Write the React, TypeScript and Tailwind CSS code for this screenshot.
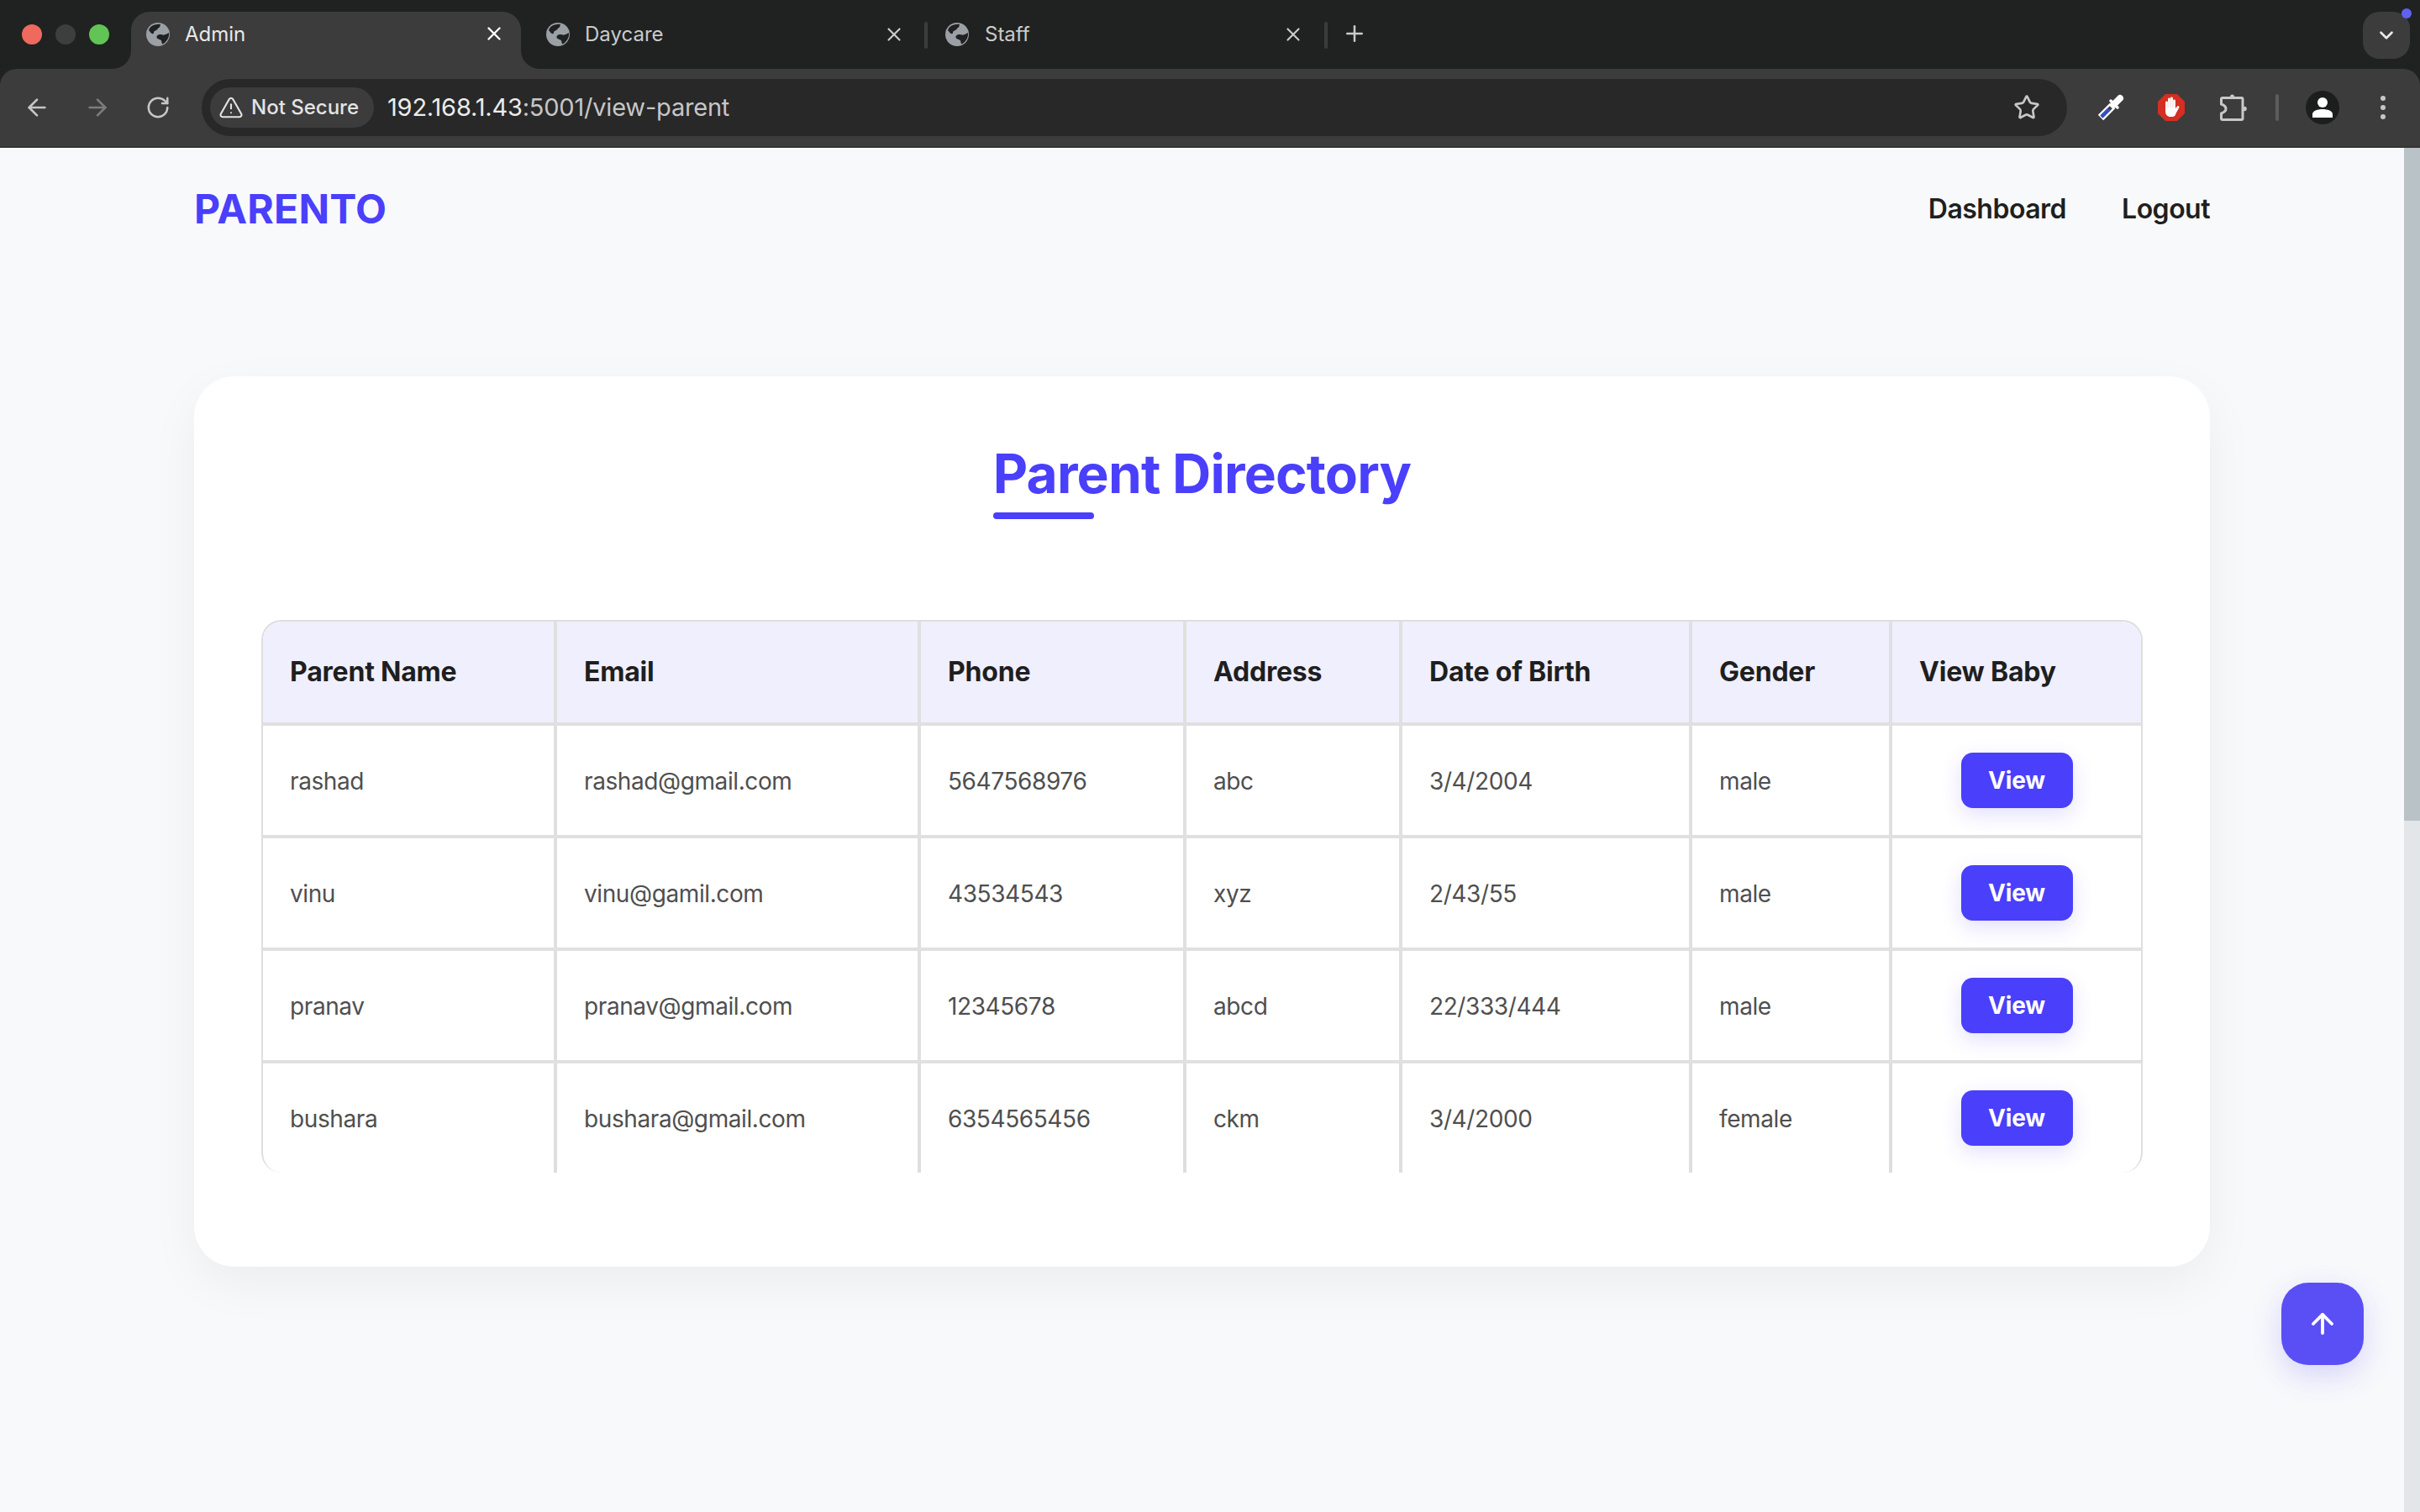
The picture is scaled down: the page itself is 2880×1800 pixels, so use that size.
import { ArrowLeft, ArrowRight, ArrowUp, ChevronDown, Plus, RotateCw, Star, TriangleAlert, X } from "lucide-react";

const parents = [
  { name: "rashad", email: "rashad@gmail.com", phone: "5647568976", address: "abc", dob: "3/4/2004", gender: "male" },
  { name: "vinu", email: "vinu@gamil.com", phone: "43534543", address: "xyz", dob: "2/43/55", gender: "male" },
  { name: "pranav", email: "pranav@gmail.com", phone: "12345678", address: "abcd", dob: "22/333/444", gender: "male" },
  { name: "bushara", email: "bushara@gmail.com", phone: "6354565456", address: "ckm", dob: "3/4/2000", gender: "female" },
];

const headers = ["Parent Name", "Email", "Phone", "Address", "Date of Birth", "Gender", "View Baby"];

function Globe() {
  return (
    <svg width="28" height="28" viewBox="0 0 28 28" className="shrink-0">
      <circle cx="14" cy="14" r="14" fill="#9aa0a6" />
      <path d="M6 4.5c3-2 7-3 11-2.500l-1 3.500c-2 .5-2 2.500-4 3.500-1.500.8-3 1-3 3 0 1.500-2 1.500-3 .5-1.500-1.500-2-3-3-3 .2-2 1.500-3.800 3-5z" fill="#202221" />
      <path d="M27 12c.5 4-1 8-4 11-1 1-3 2.500-4 2.500l-1-4c-1-2-5-1.500-5.500-4-.4-2 2-3.500 4-3.500 2.500 0 3 1 5 .5 2-.4 3.500-1.500 5.500-2.500z" fill="#202221" />
    </svg>
  );
}

function Flare({ side }: { side: "left" | "right" }) {
  if (side === "left") {
    return (
      <div className="absolute bottom-0 -left-[22px] h-[22px] w-[22px] bg-[#3c3c3c]">
        <div className="h-full w-full rounded-br-[22px] bg-[#202221]" />
      </div>
    );
  }
  return (
    <div className="absolute bottom-0 -right-[22px] h-[22px] w-[22px] bg-[#3c3c3c]">
      <div className="h-full w-full rounded-bl-[22px] bg-[#202221]" />
    </div>
  );
}

function TabStrip() {
  return (
    <div className="flex h-[82px] items-start bg-[#202221] text-[24px] text-[#c9cbcc]">
      <div className="flex h-[82px] w-[156px] shrink-0 items-center gap-[16px] pl-[26px]">
        <span className="h-[24px] w-[24px] rounded-full bg-[#ee6a5f]" />
        <span className="h-[24px] w-[24px] rounded-full bg-[#3d3f3f]" />
        <span className="h-[24px] w-[24px] rounded-full bg-[#61c454]" />
      </div>
      <div className="relative mt-[14px] flex h-[68px] w-[464px] shrink-0 items-start rounded-t-[22px] bg-[#3c3c3c] pl-[18px] pr-[19px] pt-[13px] text-[#e8e8e8]">
        <Flare side="left" />
        <Flare side="right" />
        <Globe />
        <span className="ml-[18px] flex-1 leading-[28px]">Admin</span>
        <X size={26} strokeWidth={2.2} color="#ffffff" />
      </div>
      <div className="mt-[27px] flex h-[28px] w-[480px] shrink-0 items-center pl-[30px] pr-[23px]">
        <Globe />
        <span className="ml-[18px] flex-1">Daycare</span>
        <X size={26} strokeWidth={2} />
      </div>
      <div className="mt-[26px] h-[32px] w-[4px] shrink-0 rounded-full bg-[#3c3c3c]" />
      <div className="mt-[27px] flex h-[28px] w-[472px] shrink-0 items-center pl-[21px] pr-[24px]">
        <Globe />
        <span className="ml-[19px] flex-1">Staff</span>
        <X size={26} strokeWidth={2} />
      </div>
      <div className="mt-[26px] h-[32px] w-[4px] shrink-0 rounded-full bg-[#3c3c3c]" />
      <Plus size={30} strokeWidth={2} className="ml-[17px] mt-[25px] shrink-0" />
      <div className="relative ml-auto mr-[12px] mt-[14px] flex h-[56px] w-[56px] items-center justify-center rounded-[20px] bg-[#3c3c3c]">
        <ChevronDown size={26} strokeWidth={2.5} color="#e8e8e8" />
        <span className="absolute -right-[2px] -top-[4px] h-[12px] w-[12px] rounded-full bg-[#6061ee]" />
      </div>
    </div>
  );
}

function Dropper() {
  return (
    <svg width="32" height="32" viewBox="0 0 32 32" className="shrink-0">
      <line x1="4" y1="28" x2="18" y2="14" stroke="#ffffff" strokeWidth="9" />
      <line x1="5" y1="27" x2="18" y2="14" stroke="#3c3c3c" strokeWidth="4" />
      <line x1="5" y1="27" x2="14" y2="18" stroke="#3450c4" strokeWidth="4.500" />
      <line x1="19" y1="13" x2="27" y2="5" stroke="#ffffff" strokeWidth="8" strokeLinecap="round" />
      <line x1="16" y1="8" x2="24" y2="16" stroke="#ffffff" strokeWidth="3.500" strokeLinecap="round" />
    </svg>
  );
}

function StopHand() {
  return (
    <svg width="32" height="32" viewBox="0 0 32 32" className="shrink-0">
      <polygon points="9,0 23,0 32,9 32,23 23,32 9,32 0,23 0,9" fill="#d32f23" />
      <g stroke="#ffffff" strokeWidth="2.800" strokeLinecap="round">
        <line x1="10.500" y1="10" x2="10.500" y2="20" />
        <line x1="13.500" y1="6" x2="13.500" y2="18" />
        <line x1="16.500" y1="5" x2="16.500" y2="18" />
        <line x1="19.500" y1="8" x2="19.500" y2="18" />
        <line x1="21" y1="21" x2="24" y2="15.500" />
      </g>
      <path d="M9.100 16h12.500v6c0 3-2 5-5 5h-2c-3 0-5.500-2.500-5.500-6z" fill="#ffffff" />
    </svg>
  );
}

function Puzzle() {
  return (
    <svg width="32" height="32" viewBox="0 0 32 32" fill="none" stroke="#c8c8c8" strokeWidth="3" strokeLinejoin="round" className="shrink-0">
      <path d="M3 4.500H25.500Q27 4.500 27 6V29Q27 30.500 25.500 30.500H3Q1.500 30.500 1.500 29V23Q7 21 7 17.500Q7 14 1.500 12V6Q1.500 4.500 3 4.500z" />
      <circle cx="14.500" cy="3" r="2.500" fill="#c8c8c8" stroke="none" />
      <circle cx="29" cy="17.500" r="2.800" fill="#c8c8c8" stroke="none" />
    </svg>
  );
}

function Toolbar() {
  return (
    <div className="flex h-[94px] items-start rounded-t-[20px] border-b-[2px] border-[#353535] bg-[#3c3c3c]">
      <div className="flex h-[92px] w-[240px] shrink-0 items-center pl-[28px] text-[#c4c7c5]">
        <ArrowLeft size={32} strokeWidth={2} />
        <ArrowRight size={32} strokeWidth={2} className="ml-[40px] text-[#7c7c7c]" />
        <RotateCw size={30} strokeWidth={2} className="ml-[41px]" />
      </div>
      <div className="mt-[12px] flex h-[68px] w-[2220px] shrink-0 items-center rounded-full bg-[#282828] pl-[10px] pr-[32px]">
        <div className="flex h-[48px] w-[195px] shrink-0 items-center rounded-full bg-[#3c3c3c] pl-[10px] text-[24px] font-medium text-[#e3e3e3]">
          <TriangleAlert size={30} strokeWidth={1.7} />
          <span className="ml-[9px]">Not Secure</span>
        </div>
        <span className="ml-[16px] flex-1 text-[29px] tracking-[-0.2px] text-[#c6c6c6]">
          <span className="text-[#ececec]">192.168.1.43</span>:5001/view-parent
        </span>
        <Star size={32} strokeWidth={2} color="#c7c7c7" />
      </div>
      <div className="flex h-[92px] flex-1 items-center">
        <div className="ml-[36px]">
          <Dropper />
        </div>
        <div className="ml-[40px]">
          <StopHand />
        </div>
        <div className="ml-[42px]">
          <Puzzle />
        </div>
        <div className="ml-[34px] h-[32px] w-[4px] rounded-full bg-[#5c5c5c]" />
        <div className="ml-[32px] flex h-[40px] w-[40px] items-center justify-center rounded-full bg-[#1c1e1d]">
          <svg width="26" height="26" viewBox="0 0 26 26" fill="#ffffff">
            <circle cx="13" cy="7" r="6" />
            <path d="M1 25v-4c0-4 6-6 12-6s12 2 12 6v4z" />
          </svg>
        </div>
        <div className="ml-[49px] flex flex-col gap-[5px]">
          <span className="h-[6px] w-[6px] rounded-full bg-[#c7c7c7]" />
          <span className="h-[6px] w-[6px] rounded-full bg-[#c7c7c7]" />
          <span className="h-[6px] w-[6px] rounded-full bg-[#c7c7c7]" />
        </div>
      </div>
    </div>
  );
}

function ParentTable() {
  return (
    <div className="overflow-hidden rounded-[24px] border-2 border-b-0 border-[#dedede]">
      <table className="w-full table-fixed border-separate border-spacing-0">
        <colgroup>
          <col className="w-[350px]" />
          <col className="w-[433px]" />
          <col className="w-[316px]" />
          <col className="w-[257px]" />
          <col className="w-[345px]" />
          <col className="w-[238px]" />
          <col className="w-[296px]" />
        </colgroup>
        <thead>
          <tr className="h-[124px]">
            {headers.map((h, i) => (
              <th
                key={h}
                className={
                  i === 6
                    ? "border-b-[4px] border-[#e3e3e3] bg-[#f0effe] pl-[32px] text-left text-[32px] font-bold tracking-[-0.2px] text-[#1f1f1f]"
                    : "border-b-[4px] border-r-[4px] border-[#e0e0e0] bg-[#f0effe] pl-[32px] text-left text-[32px] font-bold tracking-[-0.2px] text-[#1f1f1f]"
                }
              >
                {h}
              </th>
            ))}
          </tr>
        </thead>
        <tbody>
          {parents.map((p, i) => {
            const cell =
              i === parents.length - 1
                ? "border-r-[4px] border-[#dedede] pl-[32px] pt-[2px] text-[28px] tracking-[-0.4px] text-[#4f4f4f]"
                : "border-b-[4px] border-r-[4px] border-[#e0e0e0] pl-[32px] pt-[2px] text-[28px] tracking-[-0.4px] text-[#4f4f4f]";
            return (
              <tr key={p.email} className={i === parents.length - 1 ? "h-[130px]" : "h-[134px]"}>
                <td className={cell}>{p.name}</td>
                <td className={cell}>{p.email}</td>
                <td className={cell}>{p.phone}</td>
                <td className={cell}>{p.address}</td>
                <td className={cell}>{p.dob}</td>
                <td className={cell}>{p.gender}</td>
                <td className={i === parents.length - 1 ? "text-center" : "border-b-[4px] border-[#e0e0e0] text-center"}>
                  <button className="h-[66px] w-[133px] rounded-[14px] bg-[#4a3ffa] text-[28px] font-bold tracking-[-0.2px] text-white shadow-[0_8px_24px_rgba(74,63,250,0.16)]">
                    View
                  </button>
                </td>
              </tr>
            );
          })}
        </tbody>
      </table>
    </div>
  );
}

export default function App() {
  return (
    <div className="flex h-[1800px] w-[2880px] flex-col overflow-hidden bg-[#f8f9fb] [font-family:Inter,sans-serif]">
      <TabStrip />
      <div className="bg-[#202221]">
        <Toolbar />
      </div>
      <div className="relative flex min-h-0 flex-1">
        <main className="flex-1 px-[231px]">
          <nav className="flex h-[146px] items-center justify-between">
            <span className="text-[48px] font-bold tracking-[0.2px] text-[#4a3ffa]">PARENTO</span>
            <div className="flex items-center gap-[66px] text-[32px] font-semibold tracking-[-0.5px] text-[#1f1f1f]">
              <span>Dashboard</span>
              <span>Logout</span>
            </div>
          </nav>
          <section className="mt-[126px] h-[1060px] rounded-[48px] bg-white px-[80px] pt-[78px] shadow-[0_20px_60px_rgba(0,0,0,0.05)]">
            <div className="text-center">
              <h1 className="relative inline-block text-[64px] font-bold leading-[76px] tracking-[-0.8px] text-[#4a3ffa]">
                Parent Directory
                <span className="absolute -bottom-[16px] left-0 h-[8px] w-[120px] rounded-full bg-[#4a3ffa]" />
              </h1>
            </div>
            <div className="mt-[136px]">
              <ParentTable />
            </div>
          </section>
        </main>
        <div className="w-[19px] shrink-0 bg-[#e3e6e8]">
          <div className="h-[801px] bg-[#b9c3c7]" />
        </div>
        <button className="absolute left-[2715px] top-[1351px] flex h-[98px] w-[98px] items-center justify-center rounded-[32px] bg-[#5a4ff5] text-white shadow-[0_12px_36px_rgba(74,63,250,0.2)]">
          <ArrowUp size={38} strokeWidth={2.4} />
        </button>
      </div>
    </div>
  );
}
